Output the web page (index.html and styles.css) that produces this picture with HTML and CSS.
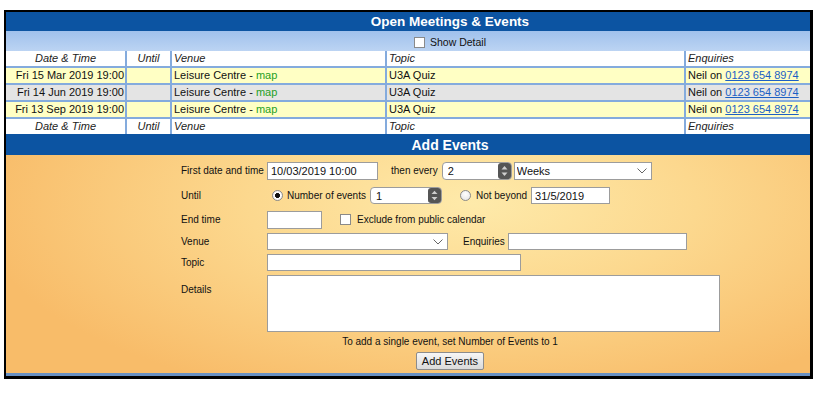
FILE: index.html
```html
<!DOCTYPE html>
<html lang="en">
<head>
<meta charset="utf-8">
<title>Open Meetings &amp; Events</title>
<link rel="stylesheet" href="styles.css">
</head>
<body>
<div class="frame">
  <div class="title">Open Meetings &amp; Events</div>
  <div class="band">
    <label class="showdetail"><input type="checkbox" class="cb"><span>Show Detail</span></label>
  </div>
  <table class="events">
    <colgroup>
      <col class="col-date"><col class="col-until"><col class="col-venue"><col class="col-topic"><col class="col-enq">
    </colgroup>
    <thead>
      <tr class="hdr"><th class="ctr">Date &amp; Time</th><th class="ctr">Until</th><th>Venue</th><th>Topic</th><th>Enquiries</th></tr>
    </thead>
    <tbody>
      <tr class="yellow"><td class="date">Fri 15 Mar 2019 19:00</td><td></td><td>Leisure Centre - <a class="map">map</a></td><td>U3A Quiz</td><td>Neil on <a class="tel">0123 654 8974</a></td></tr>
      <tr class="grey"><td class="date">Fri 14 Jun 2019 19:00</td><td></td><td>Leisure Centre - <a class="map">map</a></td><td>U3A Quiz</td><td>Neil on <a class="tel">0123 654 8974</a></td></tr>
      <tr class="yellow"><td class="date">Fri 13 Sep 2019 19:00</td><td></td><td>Leisure Centre - <a class="map">map</a></td><td>U3A Quiz</td><td>Neil on <a class="tel">0123 654 8974</a></td></tr>
    </tbody>
    <tfoot>
      <tr class="hdr"><th class="ctr">Date &amp; Time</th><th class="ctr">Until</th><th>Venue</th><th>Topic</th><th>Enquiries</th></tr>
    </tfoot>
  </table>
  <div class="title title-add">Add Events</div>
  <form class="addform">
    <div class="fields">
      <div class="row r1">
        <span class="lbl">First date and time</span>
        <input type="text" class="txt w-date" value="10/03/2019 10:00">
        <span class="txtlbl then">then every</span>
        <span class="numwrap w-every"><input type="text" class="numin" value="2"><svg class="spin" width="13" height="16" viewBox="0 0 13 16"><rect x="0" y="0" width="13" height="16" rx="3" fill="#555"/><polygon points="3.5,6.5 6.5,3 9.5,6.5" fill="#cfcfcf"/><polygon points="3.5,9.5 6.5,13 9.5,9.5" fill="#cfcfcf"/></svg></span>
        <span class="selwrap w-weeks"><select class="sel"><option>Weeks</option></select><svg class="chev" width="10" height="6" viewBox="0 0 10 6"><polyline points="0.5,0.5 5,5 9.5,0.5" fill="none" stroke="#666" stroke-width="1"/></svg></span>
      </div>
      <div class="row r2">
        <span class="lbl">Until</span>
        <input type="radio" name="until" class="radio first" checked>
        <span class="txtlbl rl">Number of events</span>
        <span class="numwrap w-count"><input type="text" class="numin" value="1"><svg class="spin" width="13" height="15" viewBox="0 0 13 15"><rect x="0" y="0" width="13" height="15" rx="3" fill="#555"/><polygon points="3.5,6 6.5,2.8 9.5,6" fill="#cfcfcf"/><polygon points="3.5,9 6.5,12.2 9.5,9" fill="#cfcfcf"/></svg></span>
        <input type="radio" name="until" class="radio second">
        <span class="txtlbl rl2">Not beyond</span>
        <input type="text" class="txt w-beyond" value="31/5/2019">
      </div>
      <div class="row r3">
        <span class="lbl">End time</span>
        <input type="text" class="txt w-end" value="">
        <input type="checkbox" class="cb excl">
        <span class="txtlbl exl">Exclude from public calendar</span>
      </div>
      <div class="row r4">
        <span class="lbl">Venue</span>
        <span class="selwrap w-venue"><select class="sel"><option></option></select><svg class="chev" width="10" height="6" viewBox="0 0 10 6"><polyline points="0.5,0.5 5,5 9.5,0.5" fill="none" stroke="#666" stroke-width="1"/></svg></span>
        <span class="txtlbl enq">Enquiries</span>
        <input type="text" class="txt w-enq h17" value="">
      </div>
      <div class="row r5">
        <span class="lbl">Topic</span>
        <input type="text" class="txt w-topic h17" value="">
      </div>
      <div class="row r6">
        <span class="lbl lbl-details">Details</span>
        <textarea class="details"></textarea>
      </div>
    </div>
    <div class="foot">
      <div class="note">To add a single event, set Number of Events to 1</div>
      <button type="button" class="btn">Add Events</button>
    </div>
  </form>
  <div class="stripe"></div>
</div>
</body>
</html>
```
FILE: styles.css
```css
* { box-sizing: border-box; }

body {
  margin: 0;
  background: #fff;
  font-family: "Liberation Sans", Arial, sans-serif;
  color: #111;
}

.frame {
  width: 809px;
  margin: 10px 0 0 4px;
  border: 2px solid #000;
  border-right-width: 3px;
  border-bottom-width: 3px;
  background: #fff;
}

.title {
  height: 19px;
  line-height: 19px;
  background: #0c54a2;
  color: #fff;
  font-weight: bold;
  font-size: 13.5px;
  text-align: center;
  padding-left: 84px;
}

.title-add {
  height: 21px;
  line-height: 22px;
  font-size: 14px;
}

.band {
  height: 20px;
  background: linear-gradient(#a0c1ec, #bcd4f3);
  display: flex;
  align-items: center;
  justify-content: center;
  padding-left: 84px;
  padding-top: 2px;
  font-size: 10.5px;
}

.showdetail {
  display: flex;
  align-items: center;
  gap: 5px;
}

.cb {
  appearance: none;
  -webkit-appearance: none;
  margin: 0;
  width: 11px;
  height: 11px;
  border: 1px solid #8a8a8a;
  background: #fff;
  flex: none;
}

/* table */
.events {
  width: 100%;
  border-collapse: collapse;
  table-layout: fixed;
  border-style: hidden;
  font-size: 11px;
}

.col-date { width: 120px; }
.col-until { width: 45px; }
.col-venue { width: 215px; }
.col-topic { width: 299px; }
.col-enq { width: 125px; }

.events th,
.events td {
  border: 2px solid #84abdd;
  padding: 0 2px;
  line-height: 15px;
  white-space: nowrap;
  overflow: hidden;
  text-align: left;
  font-weight: normal;
  color: #111;
}

.events th {
  font-style: italic;
  background: #fff;
  color: #222;
}

.events th.ctr { text-align: center; }

.events td.date {
  text-align: right;
  padding-right: 1px;
}

.yellow td { background: #ffffc4; }
.grey td { background: #e4e4e4; }

.map { color: #1fa01f; }

.tel {
  color: #1c5fc4;
  text-decoration: underline;
}

/* add form */
.addform {
  height: 218px;
  padding: 7px 0 0 0;
  background:
    radial-gradient(ellipse 62% 95% at 58% 22%, #feeaaa 0%, #fcd88e 45%, #f8bc69 100%);
  font-size: 10px;
  color: #111;
}

.fields { padding-left: 175px; }

.row {
  display: flex;
  align-items: flex-start;
}

.r1 { height: 25px; }
.r2 { height: 24px; }
.r3 { height: 22px; }
.r4 { height: 21px; }
.r5 { height: 21px; }
.r6 { height: 57px; }

.lbl {
  width: 86px;
  flex: none;
  line-height: 18px;
  white-space: nowrap;
}

.lbl-details { padding-top: 6px; }

.txtlbl {
  line-height: 18px;
  white-space: nowrap;
}

.then { margin-left: 13px; }
.rl { margin-left: 4px; }
.rl2 { margin-left: 5px; }
.exl { margin-left: 6px; }
.enq { margin-left: 15px; line-height: 17px; }

.txt {
  height: 18px;
  margin: 0;
  border: 1px solid #9c9c9c;
  background: #fff;
  font: 11px "Liberation Sans", Arial, sans-serif;
  color: #111;
  padding: 0 3px;
  outline: none;
}

.h17 { height: 17px; }

.w-date { width: 111px; }
.w-beyond { width: 79px; height: 17px; margin-left: 4px; }
.w-end { width: 55px; }
.w-enq { width: 179px; margin-left: 3px; }
.w-topic { width: 254px; }

.numwrap {
  display: flex;
  align-items: center;
  justify-content: space-between;
  height: 18px;
  border: 1px solid #9c9c9c;
  border-radius: 4px;
  background: #fff;
  padding: 0 0 0 5px;
  flex: none;
}

.w-every { width: 70px; margin-left: 4px; }
.w-count { width: 72px; margin-left: 4px; height: 17px; }

.numin {
  width: 30px;
  border: none;
  padding: 0;
  margin: 0;
  background: transparent;
  font: 11px "Liberation Sans", Arial, sans-serif;
  color: #111;
  outline: none;
}

.spin { display: block; flex: none; }

.selwrap {
  display: flex;
  align-items: center;
  justify-content: space-between;
  height: 18px;
  border: 1px solid #9c9c9c;
  background: #fff;
  padding: 0 4px 0 0;
  flex: none;
}

.w-weeks { width: 138px; margin-left: 2px; }
.w-venue { width: 181px; height: 17px; }

.sel {
  appearance: none;
  -webkit-appearance: none;
  border: none;
  background: transparent;
  margin: 0;
  padding: 0 0 0 2px;
  font: 11px "Liberation Sans", Arial, sans-serif;
  color: #111;
  flex: 1;
  outline: none;
}

.chev { display: block; flex: none; }

.radio {
  appearance: none;
  -webkit-appearance: none;
  margin: 3px 0 0 0;
  width: 11px;
  height: 11px;
  border-radius: 50%;
  border: 1px solid #8a8a8a;
  background: radial-gradient(circle at 50% 35%, #ffffff 0%, #e2e2e2 100%);
  flex: none;
}

.radio:checked {
  background: radial-gradient(circle, #111 0 2.2px, #ffffff 2.8px, #e6e6e6 100%);
}

.radio.first { margin-left: 5px; }
.radio.second { margin-left: 18px; }

.cb.excl { margin: 3px 0 0 18px; }

.details {
  width: 453px;
  height: 57px;
  margin: 0;
  border: 1px solid #9c9c9c;
  background: #fff;
  resize: none;
  outline: none;
}

.foot {
  padding-left: 84px;
  text-align: center;
}

.note {
  margin-top: 3px;
  line-height: 14px;
  font-size: 10px;
}

.btn {
  margin-top: 3px;
  width: 68px;
  height: 18px;
  padding: 0;
  border: 1px solid #8c8c8c;
  border-radius: 2px;
  background: linear-gradient(#f6f6f6, #dadada);
  font: 11px "Liberation Sans", Arial, sans-serif;
  color: #111;
  white-space: nowrap;
}

.stripe {
  height: 3px;
  background: #6890c3;
}
```
